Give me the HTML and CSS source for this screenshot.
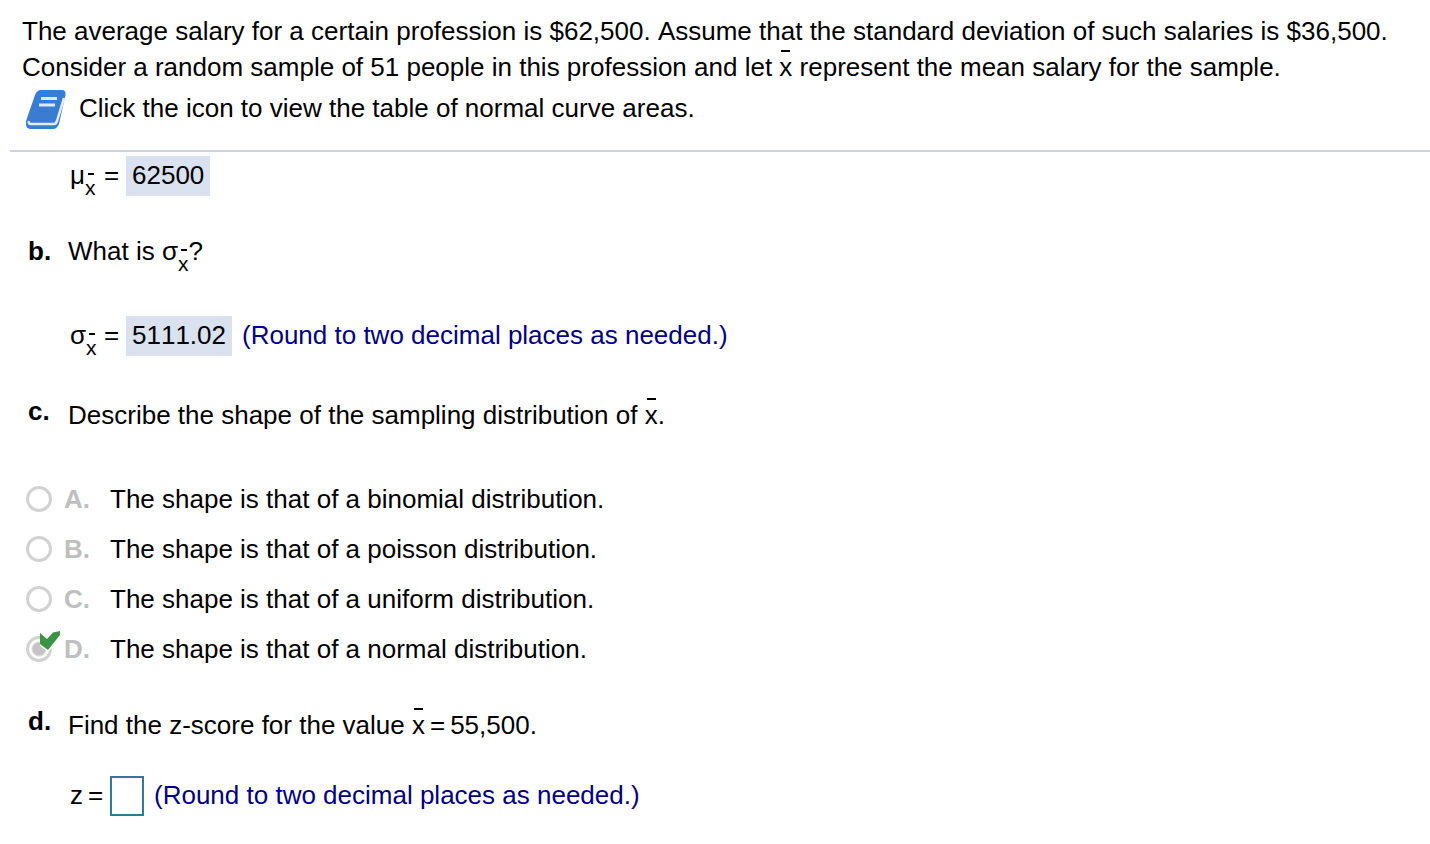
FILE: index.html
```html
<!DOCTYPE html>
<html lang="en">
<head>
  <meta charset="UTF-8" />
  <meta name="viewport" content="width=device-width, initial-scale=1.0"/>
  <title>Sampling distribution of the mean</title>
  <link rel="stylesheet" href="styles.css">
</head>
<body>
  <header class="problem">
    <p>The average salary for a certain profession is $62,500. Assume that the standard deviation of such salaries is $36,500. Consider a random sample of 51 people in this profession and let <span class="xbar">x</span> represent the mean salary for the sample.</p>
    <div class="resource">
      <button class="book" type="button" aria-label="View the table of normal curve areas">
        <svg width="40" height="40" viewBox="0 0 40 40">
          <path d="M15 0H36Q40 0 39.500 5L33 34Q31 39 27 39H4Q-1 38 0 31L9 5Q11 0 15 0Z" fill="#3b7cd3"/>
          <path d="M3 31Q2 34 5 34H28Q30 34 31 31L38 8" fill="none" stroke="#e4eefb" stroke-width="2.500"/>
          <path d="M15 8.500H31M13 15H29" stroke="#dce9f9" stroke-width="3"/>
        </svg>
      </button>
      <span>Click the icon to view the table of normal curve areas.</span>
    </div>
  </header>

  <main class="work">
    <div class="answer">
      <span class="stat">μ<span class="sub">x</span></span>
      <span class="equals">=</span>
      <span class="value">62500</span>
    </div>

    <div class="question part-b">
      <b>b.</b>
      <span>What is σ<span class="sub">x</span>?</span>
    </div>
    <div class="answer part-b-answer">
      <span class="stat">σ<span class="sub">x</span></span>
      <span class="equals">=</span>
      <span class="value">5111.02</span>
      <span class="hint">(Round to two decimal places as needed.)</span>
    </div>

    <div class="question raised">
      <b>c.</b>
      <span>Describe the shape of the sampling distribution of <span class="xbar">x</span>.</span>
    </div>
    <div class="choices">
      <label class="choice">
        <span class="mark"><input type="radio" name="shape" disabled></span>
        <b>A.</b>
        <span>The shape is that of a binomial distribution.</span>
      </label>
      <label class="choice">
        <span class="mark"><input type="radio" name="shape" disabled></span>
        <b>B.</b>
        <span>The shape is that of a poisson distribution.</span>
      </label>
      <label class="choice">
        <span class="mark"><input type="radio" name="shape" disabled></span>
        <b>C.</b>
        <span>The shape is that of a uniform distribution.</span>
      </label>
      <label class="choice">
        <span class="mark">
          <input type="radio" name="shape" checked disabled>
          <svg class="tick" width="20" height="20" viewBox="0 0 20 20">
            <path d="M0 2L7 8L13 1.500L20 0V4L8 19L0 13Z" fill="#3c9546" stroke="#fff" stroke-width="3" paint-order="stroke"/>
          </svg>
        </span>
        <b>D.</b>
        <span>The shape is that of a normal distribution.</span>
      </label>
    </div>

    <div class="question raised">
      <b>d.</b>
      <span>Find the z-score for the value <span class="xbar">x</span><span class="tight">=</span>55,500.</span>
    </div>
    <div class="answer z-answer">
      <label for="zscore">z<span class="tight">=</span></label>
      <input class="entry" id="zscore" type="text">
      <span class="hint">(Round to two decimal places as needed.)</span>
    </div>
  </main>
</body>
</html>
```

FILE: styles.css
```css
body {
  margin: 0;
  font-family: "Liberation Sans", Arial, sans-serif;
  font-size: 26px;
  line-height: 38px;
  font-kerning: none;
  color: #000;
  background-color: #fff;
}
.problem {
  margin-left: 10px;
  padding: 13px 12px 20px;
  border-bottom: 2px solid #cdd0df;
}
.problem p {
  margin: 0;
  line-height: 36px;
}
.resource {
  display: flex;
  gap: 13px;
  margin: 5px 0 0 4px;
  line-height: 36px;
}
.book {
  width: 40px;
  height: 40px;
  padding: 0;
  border: 0;
  background: none;
  cursor: pointer;
}
.book svg { display: block; }

/* x with a bar over it */
.xbar {
  position: relative;
}
.xbar::before {
  content: "";
  position: absolute;
  top: -2px;
  left: 2px;
  width: 9px;
  height: 2px;
  background-color: #000;
}
.sub {
  position: relative;
  font-size: 21px;
  line-height: 0;
  vertical-align: -11px;
}
.sub::before {
  content: "";
  position: absolute;
  top: -3px;
  left: 3px;
  width: 6px;
  height: 2px;
  background-color: #000;
}

.work {
  padding: 4px 28px 28px;
}
.question, .answer, .choice {
  display: flex;
  min-height: 40px;
}
.question b {
  flex: 0 0 40px;
}
.raised > span {
  padding-top: 4px;
}
.part-b { margin-top: 36px; }
.part-b-answer {
  margin: 44px 0 36px;
}
.answer {
  padding-left: 42px;
}
.stat { width: 34px; }
.equals { width: 22px; }
.value {
  padding: 0 6px;
  background-color: #dae1ef;
}
.hint {
  margin-left: 10px;
  color: #000080;
}
.tight { margin: 0 5px; }

.choices {
  display: flex;
  flex-direction: column;
  gap: 10px;
  margin: 46px 0 32px -2px;
}
.choice b {
  width: 46px;
  color: #bfbfbf;
}
.mark {
  position: relative;
  width: 38px;
}
.mark input {
  display: block;
  appearance: none;
  box-sizing: border-box;
  width: 26px;
  height: 26px;
  margin: 6px 0;
  border: 3px solid #d2d2d2;
  border-radius: 50%;
}
.mark input:checked {
  background: radial-gradient(circle, #c4c4c4 6px, #fff 8px);
}
.tick {
  position: absolute;
  top: 1px;
  left: 14px;
}
.z-answer { margin-top: 32px; }
.z-answer label { width: 40px; }
.entry {
  box-sizing: border-box;
  width: 34px;
  height: 40px;
  padding: 0 4px;
  border: 2px solid #31789a;
  font: inherit;
}
```
